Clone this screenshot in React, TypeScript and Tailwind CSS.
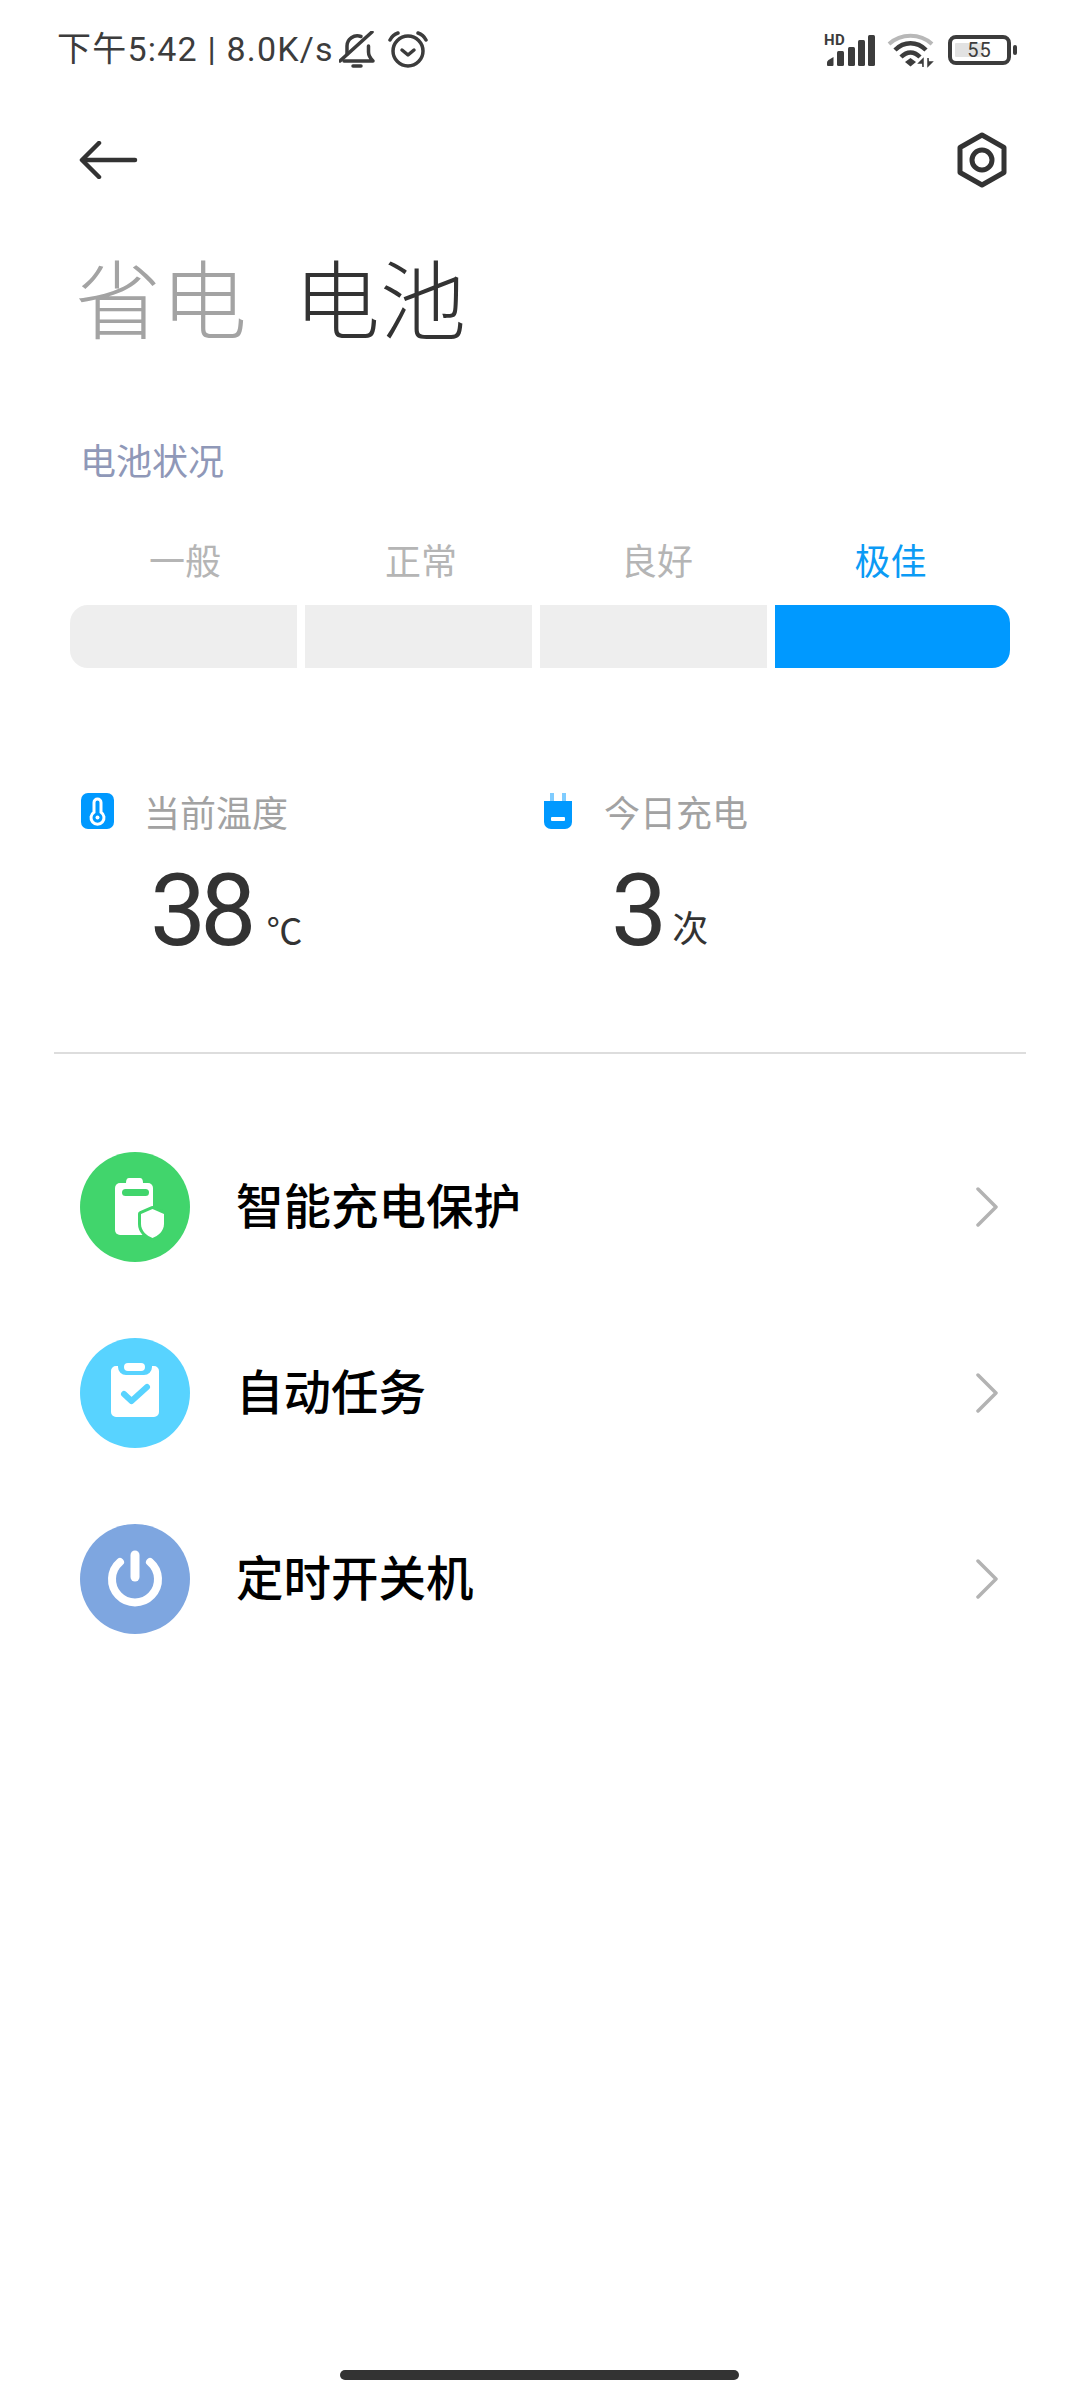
const cjk = "font-['Roboto','Noto_Sans_CJK_SC',sans-serif]";

function SignalIcon() {
  return (
    <svg width="52" height="36" viewBox="0 0 52 36" fill="#3c3c3c">
      <text x="0" y="13" fontSize="15" fontWeight="700" fontFamily="Roboto, sans-serif" letterSpacing="0.5">HD</text>
      <path d="M3 33v-2.500q0-1.500 1.500-2.500l5-3v8q0 1-1 1h-4.500q-1 0-1-1z" />
      <rect x="13" y="19" width="7" height="15" rx="1.500" />
      <rect x="24" y="15" width="7" height="19" rx="1.500" />
      <rect x="34" y="8" width="7" height="26" rx="1.500" />
      <rect x="44" y="3" width="7" height="31" rx="1.500" />
    </svg>
  );
}

function WifiIcon() {
  return (
    <svg width="48" height="36" viewBox="0 0 48 36" fill="none">
      <path d="M2 12C14 1 33 1 45 12" stroke="#b8b8b8" strokeWidth="4" />
      <path d="M8 18C17 9 30 9 39 18" stroke="#3c3c3c" strokeWidth="4.500" />
      <path d="M14 25C20 19 27 19 33 25" stroke="#3c3c3c" strokeWidth="4.500" />
      <path d="M18 30l5.500-4 5.500 4-5.500 4.500z" fill="#3c3c3c" />
      <path d="M36 35v-8l-4 4h3M41 26v8l4-4h-3" fill="#3c3c3c" stroke="#3c3c3c" strokeWidth="1.500" />
    </svg>
  );
}

function BatteryIcon() {
  return (
    <div className="flex items-center gap-[2px]">
      <div className="relative flex h-[30px] w-[63px] items-center justify-center rounded-[8px] border-[4px] border-[#3c3c3c]">
        <div className="absolute top-[4px] bottom-[4px] left-[3px] w-[29px] rounded-[1px] bg-[#e2e2e2]" />
        <span className="relative font-['Roboto',sans-serif] text-[20px] leading-none tracking-[1px] text-[#3c3c3c]">55</span>
      </div>
      <div className="h-[10px] w-[4px] rounded-full bg-[#3c3c3c]" />
    </div>
  );
}

function StatusBar() {
  return (
    <div className="flex h-[68px] items-end justify-between pr-[63px] pl-[57px]">
      <div className="flex items-center">
        <span className={`${cjk} text-[34px] leading-[38px] tracking-[1.2px] text-[#3c3c3c]`}>下午5:42 | 8.0K/s</span>
        <svg className="ml-[5px]" width="36" height="37" viewBox="0 0 36 37" fill="none" stroke="#3c3c3c" strokeWidth="3.500" strokeLinecap="round" strokeLinejoin="round">
          <path d="M1 30L33 1" />
          <path d="M5 30h29c-3-3-4.500-5-4.500-9v-6" />
          <path d="M22 5.500C15 3 8 8 8 15v8" />
          <path d="M14 35h8" />
        </svg>
        <svg className="ml-[13px]" width="40" height="37" viewBox="0 0 40 37" fill="none" stroke="#3c3c3c" strokeLinecap="round" strokeLinejoin="round">
          <circle cx="20" cy="20" r="15" strokeWidth="3.500" />
          <path d="M14 19l6 5 6-5" strokeWidth="3.500" />
          <path d="M2 9C4 5 7 3 10 2M30 2c3 1 6 3 8 7" strokeWidth="3.500" />
        </svg>
      </div>
      <div className="flex items-center">
        <SignalIcon />
        <div className="ml-[11px]"><WifiIcon /></div>
        <div className="ml-[13px]"><BatteryIcon /></div>
      </div>
    </div>
  );
}

function TopBar() {
  return (
    <div className="mt-[65px] flex h-[54px] items-center justify-between pr-[72px] pl-[79px]">
      <svg width="60" height="38" viewBox="0 0 60 38" fill="none" stroke="#333333" strokeWidth="4.500" strokeLinecap="round" strokeLinejoin="round">
        <path d="M20 2L3 19l17 17" />
        <path d="M4 19h52" />
      </svg>
      <svg width="52" height="56" viewBox="0 0 52 56" fill="none" stroke="#333333">
        <path d="M26 3L48 15.500v25L26 53 4 40.500v-25z" strokeWidth="5" strokeLinejoin="round" />
        <circle cx="26" cy="28" r="10" strokeWidth="5" />
      </svg>
    </div>
  );
}

const levels = [
  { label: "一般", cls: "pl-[3px] text-[#b5b5b5]" },
  { label: "正常", cls: "pl-[5px] text-[#b5b5b5]" },
  { label: "良好", cls: "pl-[7px] text-[#b5b5b5]" },
  { label: "极佳", cls: "pr-[4px] text-[#0b9bf5]" },
];

function BatteryStatus() {
  return (
    <div className="mt-[96px]">
      <div className="pl-[80px] font-['Noto_Sans_CJK_SC',sans-serif] text-[36px] leading-[44px] text-[#8f98b8]">电池状况</div>
      <div className="mx-[70px] mt-[56px] grid grid-cols-[227px_227px_227px_235px] gap-x-[8px]">
        {levels.map((l) => (
          <div key={l.label} className={`text-center font-['Noto_Sans_CJK_SC',sans-serif] text-[36px] leading-[44px] ${l.cls}`}>
            {l.label}
          </div>
        ))}
        <div className="mt-[24px] h-[63px] rounded-l-[18px] bg-[#eeeeee]" />
        <div className="mt-[24px] h-[63px] bg-[#eeeeee]" />
        <div className="mt-[24px] h-[63px] bg-[#eeeeee]" />
        <div className="mt-[24px] h-[63px] rounded-r-[18px] bg-[#0099ff]" />
      </div>
    </div>
  );
}

function Stat({ icon, iconCls, valueCls, label, value, unit, unitClass }: { icon: React.ReactNode; iconCls: string; valueCls: string; label: string; value: string; unit: string; unitClass: string }) {
  return (
    <div className="w-[462px]">
      <div className="flex h-[36px] items-center">
        <div className={`flex shrink-0 ${iconCls}`}>{icon}</div>
        <span className="font-['Noto_Sans_CJK_SC',sans-serif] text-[36px] leading-[36px] text-[#a2a2a2]">{label}</span>
      </div>
      <div className={`mt-[29px] flex items-baseline ${valueCls}`}>
        <span className="font-['Roboto',sans-serif] text-[100px] leading-[106px] tracking-[-6px] text-[#333333]">{value}</span>
        <span className={unitClass}>{unit}</span>
      </div>
    </div>
  );
}

function Stats() {
  return (
    <div className="mt-[125px] flex pl-[81px]">
      <Stat
        label="当前温度"
        value="38"
        unit="℃"
        iconCls="w-[63px]"
        valueCls="pl-[69px]"
        unitClass="ml-[16px] font-['Noto_Sans_CJK_SC',sans-serif] text-[36px] leading-none text-[#333333]"
        icon={
          <svg width="33" height="36" viewBox="0 0 33 36">
            <rect width="33" height="36" rx="7" fill="#0099ff" />
            <path d="M16.500 6a3.500 3.500 0 0 0-3.500 3.500v9.700a6.500 6.500 0 1 0 7 0V9.500A3.500 3.500 0 0 0 16.500 6z" fill="none" stroke="#fff" strokeWidth="3" />
            <circle cx="16.500" cy="24.500" r="2" fill="#fff" />
          </svg>
        }
      />
      <Stat
        label="今日充电"
        value="3"
        unit="次"
        iconCls="w-[61px]"
        valueCls="pl-[68px]"
        unitClass="ml-[11px] -translate-y-[3px] font-['Noto_Sans_CJK_SC',sans-serif] text-[36px] leading-none text-[#333333]"
        icon={
          <svg width="30" height="36" viewBox="0 0 30 36">
            <rect x="7" y="0" width="4" height="9" fill="#7fccff" />
            <rect x="19" y="0" width="4" height="9" fill="#7fccff" />
            <path d="M1 8h28v21a7 7 0 0 1-7 7H8a7 7 0 0 1-7-7z" fill="#0099ff" />
            <rect x="8" y="24" width="14" height="4" rx="1" fill="#fff" />
          </svg>
        }
      />
    </div>
  );
}

function GreenIcon() {
  return (
    <svg width="110" height="110" viewBox="0 0 110 110" fill="#fff">
      <path d="M49 26h11q3 0 3 5H46q0-5 3-5z" />
      <rect x="35" y="31" width="38" height="52" rx="5" />
      <rect x="42" y="37" width="27" height="7" rx="3.500" fill="#41d56c" />
      <rect x="66" y="70" width="12" height="16" fill="#41d56c" />
      <path
        d="M72.500 57L84 62V72C84 79 78 84 72.500 86 67 84 61 79 61 72V62Z"
        stroke="#41d56c"
        strokeWidth="6"
        strokeLinejoin="round"
        paintOrder="stroke"
      />
    </svg>
  );
}

function ClipboardIcon() {
  return (
    <svg width="110" height="110" viewBox="0 0 110 110" fill="none">
      <path d="M36 28h2v1a8 8 0 0 0 8 8h18a8 8 0 0 0 8-8v-1h2a5 5 0 0 1 5 5v41a5 5 0 0 1-5 5H36a5 5 0 0 1-5-5V33a5 5 0 0 1 5-5z" fill="#fff" />
      <rect x="44" y="25" width="21" height="8" rx="4" fill="#fff" />
      <path d="M44 56l7.500 7L67 49" stroke="#58d3ff" strokeWidth="6" strokeLinecap="round" strokeLinejoin="round" />
    </svg>
  );
}

function PowerIcon() {
  return (
    <svg width="110" height="110" viewBox="0 0 110 110" fill="none" stroke="#fff" strokeLinecap="round">
      <path d="M40 38a23 23 0 1 0 30 0" strokeWidth="8" />
      <path d="M55 31v22" strokeWidth="9" />
    </svg>
  );
}

const rows = [
  { label: "智能充电保护", color: "bg-[#41d56c]", icon: <GreenIcon /> },
  { label: "自动任务", color: "bg-[#58d3ff]", icon: <ClipboardIcon /> },
  { label: "定时开关机", color: "bg-[#7ea6e0]", icon: <PowerIcon /> },
];

function Menu() {
  return (
    <div className="mt-[98px] flex flex-col gap-y-[76px] pr-[81px] pl-[80px]">
      {rows.map((r) => (
        <div key={r.label} className="flex h-[110px] items-center">
          <div className={`h-[110px] w-[110px] shrink-0 rounded-full ${r.color}`}>{r.icon}</div>
          <span className="ml-[46px] flex-1 pb-[6px] font-['Noto_Sans_CJK_SC',sans-serif] text-[47.500px] leading-[64px] font-medium text-black">{r.label}</span>
          <svg width="24" height="40" viewBox="0 0 24 40" fill="none" stroke="#b3b3b3" strokeWidth="3.500" strokeLinecap="round" strokeLinejoin="round">
            <path d="M3 2l18 18L3 38" />
          </svg>
        </div>
      ))}
    </div>
  );
}

export default function App() {
  return (
    <div className="relative h-[2400px] w-[1080px] overflow-hidden bg-white">
      <StatusBar />
      <TopBar />
      <div className="mt-[64px] flex pl-[75px] font-['Noto_Sans_CJK_SC',sans-serif] text-[86px] leading-[90px] font-light">
        <span className="text-[#a3a3a3]">省电</span>
        <span className="ml-[47px] text-[#333333]">电池</span>
      </div>
      <BatteryStatus />
      <Stats />
      <div className="mx-[54px] mt-[88px] h-[2px] bg-[#dddddd]" />
      <Menu />
      <div className="absolute top-[2370px] left-[340px] h-[10px] w-[399px] rounded-full bg-[#333333]" />
    </div>
  );
}
